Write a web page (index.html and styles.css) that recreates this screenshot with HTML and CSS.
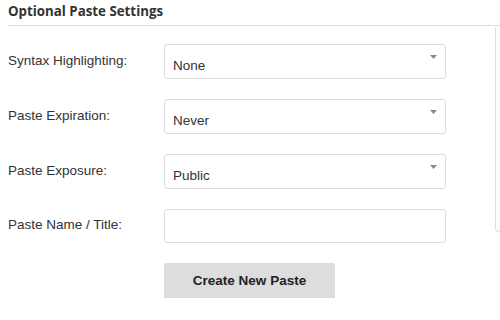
FILE: index.html
```html
<!DOCTYPE html>
<html lang="en">

<head>
  <meta charset="UTF-8">
  <title>Optional Paste Settings</title>
  <link rel="stylesheet" href="styles.css">
</head>

<body>
  <div class="page">
    <div class="settings-head">
      <h2>Optional Paste Settings</h2>
    </div>
    <div class="settings-body">
      <form class="settings-form">
        <label class="field-label" for="syntax">Syntax Highlighting:</label>
        <div class="select-wrap">
          <select id="syntax" class="field-select">
            <option>None</option>
          </select>
          <svg class="select-arrow" width="7" height="4" viewBox="0 0 7 4"><path d="M0 0h7L3.5 4z" fill="#888"/></svg>
        </div>

        <label class="field-label" for="expiration">Paste Expiration:</label>
        <div class="select-wrap">
          <select id="expiration" class="field-select">
            <option>Never</option>
          </select>
          <svg class="select-arrow" width="7" height="4" viewBox="0 0 7 4"><path d="M0 0h7L3.5 4z" fill="#888"/></svg>
        </div>

        <label class="field-label" for="exposure">Paste Exposure:</label>
        <div class="select-wrap">
          <select id="exposure" class="field-select">
            <option>Public</option>
          </select>
          <svg class="select-arrow" width="7" height="4" viewBox="0 0 7 4"><path d="M0 0h7L3.5 4z" fill="#888"/></svg>
        </div>

        <label class="field-label" for="title">Paste Name / Title:</label>
        <input id="title" class="field-input" type="text">

        <div></div>
        <div class="actions">
          <button type="button" class="btn-create">Create New Paste</button>
        </div>
      </form>
      <div class="side-box"></div>
    </div>
  </div>
</body>

</html>
```

FILE: styles.css
```css
* {
  box-sizing: border-box;
  margin: 0;
  padding: 0;
}

body {
  background: #fff;
  font-family: 'Liberation Sans', Arial, sans-serif;
  color: #333;
}

.page {
  padding: 0 0 0 8px;
  width: 500px;
  overflow: hidden;
}

.settings-head {
  border-bottom: 1px solid #ddd;
  padding: 3px 0 6px;
}

.settings-head h2 {
  font-family: 'Open Sans', sans-serif;
  font-size: 13.3px;
  font-weight: 700;
  line-height: 16px;
  color: #333;
}

.settings-body {
  display: grid;
  grid-template-columns: 487px 200px;
}

.settings-form {
  display: grid;
  grid-template-columns: 156px 282px;
  row-gap: 20px;
  align-items: center;
  padding-top: 18px;
}

.field-label {
  font-size: 13.5px;
  color: #333;
  padding-bottom: 3px;
}

.select-wrap {
  position: relative;
}

.field-select {
  appearance: none;
  -webkit-appearance: none;
  display: block;
  width: 100%;
  height: 35px;
  border: 1px solid #ddd;
  border-radius: 3px;
  background: #fff;
  font-family: 'Liberation Sans', Arial, sans-serif;
  font-size: 13.5px;
  color: #333;
  padding: 8px 8px 0;
  outline: none;
}

.select-arrow {
  position: absolute;
  right: 9px;
  top: 11px;
}

.field-input {
  display: block;
  width: 100%;
  height: 34px;
  border: 1px solid #ddd;
  border-radius: 3px;
  background: #fff;
  outline: none;
}

.btn-create {
  width: 171px;
  height: 35px;
  border: none;
  border-radius: 2px;
  background: #ddd;
  box-shadow: 0 1px 0 #c4c4c4;
  font-family: 'Liberation Sans', Arial, sans-serif;
  font-size: 13.5px;
  font-weight: 700;
  color: #222;
}

.side-box {
  height: 205px;
  margin-top: 1px;
  border: 1px solid #ddd;
  border-top: none;
  border-radius: 0 0 0 4px;
}
```
